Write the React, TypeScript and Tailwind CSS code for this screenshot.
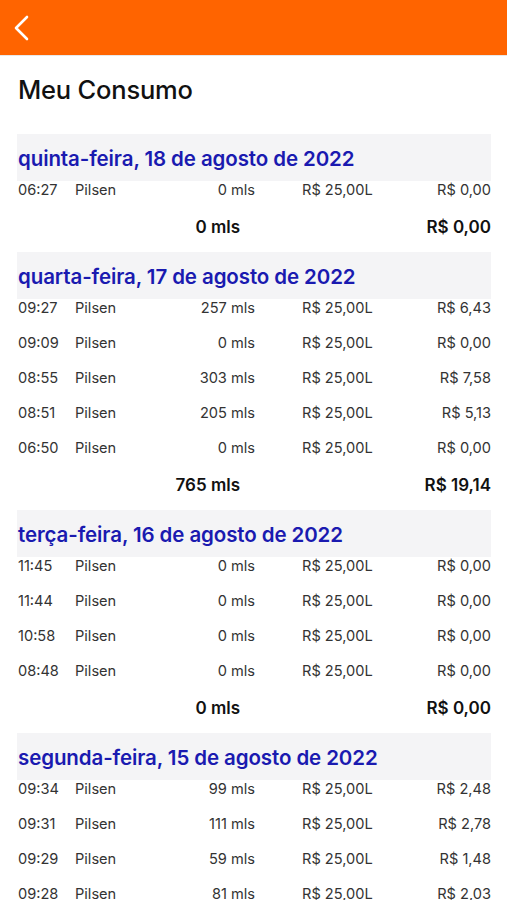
import React from "react";

type Row = { t: string; ml: string; v: string };
type Day = { title: string; rows: Row[]; totalMl: string; total: string };

const days: Day[] = [
  { title: "quinta-feira, 18 de agosto de 2022", rows: [{ t: "06:27", ml: "0 mls", v: "R$ 0,00" }], totalMl: "0 mls", total: "R$ 0,00" },
  {
    title: "quarta-feira, 17 de agosto de 2022",
    rows: [
      { t: "09:27", ml: "257 mls", v: "R$ 6,43" },
      { t: "09:09", ml: "0 mls", v: "R$ 0,00" },
      { t: "08:55", ml: "303 mls", v: "R$ 7,58" },
      { t: "08:51", ml: "205 mls", v: "R$ 5,13" },
      { t: "06:50", ml: "0 mls", v: "R$ 0,00" },
    ],
    totalMl: "765 mls",
    total: "R$ 19,14",
  },
  {
    title: "terça-feira, 16 de agosto de 2022",
    rows: [
      { t: "11:45", ml: "0 mls", v: "R$ 0,00" },
      { t: "11:44", ml: "0 mls", v: "R$ 0,00" },
      { t: "10:58", ml: "0 mls", v: "R$ 0,00" },
      { t: "08:48", ml: "0 mls", v: "R$ 0,00" },
    ],
    totalMl: "0 mls",
    total: "R$ 0,00",
  },
  {
    title: "segunda-feira, 15 de agosto de 2022",
    rows: [
      { t: "09:34", ml: "99 mls", v: "R$ 2,48" },
      { t: "09:31", ml: "111 mls", v: "R$ 2,78" },
      { t: "09:29", ml: "59 mls", v: "R$ 1,48" },
      { t: "09:28", ml: "81 mls", v: "R$ 2,03" },
    ],
    totalMl: "",
    total: "",
  },
];

export default function App() {
  return (
    <div className="w-[507px] h-[900px] overflow-hidden bg-white" style={{ fontFamily: "Inter, 'Noto Sans', sans-serif" }}>
      <div className="h-[56px] bg-[#ff6400] flex items-center pl-[13px] border-b border-[#e8e8e8]">
        <svg width="18" height="26" viewBox="0 0 18 26" fill="none">
          <path d="M14 2 L3 13 L14 24" stroke="white" strokeWidth="2.6" strokeLinecap="round" strokeLinejoin="round" />
        </svg>
      </div>
      <div className="px-[18px] pt-[16px] h-[78px] text-[25.5px] leading-[36px] font-medium text-[#111] tracking-[-0.2px]">Meu Consumo</div>
      <div className="pl-[17px] pr-[16px]">
        {days.map((d) => (
          <div key={d.title}>
            <div className="h-[47px] bg-[#f4f4f6] flex items-center pl-[1px] pt-[3px] text-[20.5px] font-semibold text-[#1a1ab0] tracking-[-0.1px]">
              {d.title}
            </div>
            {d.rows.map((r, i) => (
              <div key={i} className="h-[35px] flex items-start text-[14.6px] text-[#333] leading-[19px] pl-[1px]">
                <span className="w-[57px]">{r.t}</span>
                <span className="w-[100px]">Pilsen</span>
                <span className="w-[80px] text-right">{r.ml}</span>
                <span className="ml-[47px] w-[100px]">R$ 25,00L</span>
                <span className="flex-1 text-right">{r.v}</span>
              </div>
            ))}
            {d.total && (
              <div className="h-[36px] flex items-start pt-[1px] text-[17px] font-semibold text-[#111] leading-[21px]">
                <span className="w-[223px] text-right">{d.totalMl}</span>
                <span className="flex-1 text-right">{d.total}</span>
              </div>
            )}
          </div>
        ))}
      </div>
    </div>
  );
}
